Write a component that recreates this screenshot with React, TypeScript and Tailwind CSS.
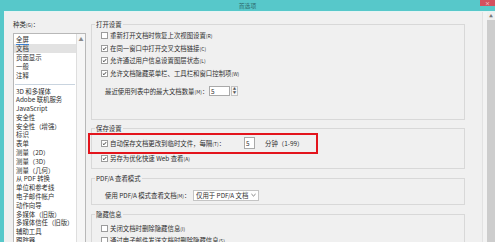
import React from 'react';

const topItems = ['全屏', '文档', '页面显示', '一般', '注释'];
const moreItems = [
  '3D 和多媒体',
  'Adobe 联机服务',
  'JavaScript',
  '安全性',
  '安全性（增强）',
  '标识',
  '表单',
  '测量（2D）',
  '测量（3D）',
  '测量（几何）',
  '从 PDF 转换',
  '单位和参考线',
  '电子邮件帐户',
  '动作向导',
  '多媒体（旧版）',
  '多媒体信任（旧版）',
  '辅助工具',
  '跟踪器',
];

function Check({ on }: { on?: boolean }) {
  return (
    <span className="w-[7px] h-[7px] border border-[#9c9c9c] bg-white flex items-center justify-center shrink-0">
      {on && (
        <svg viewBox="0 0 7 7" className="w-[7px] h-[7px]">
          <path d="M1.2 3.6 L2.8 5.2 L5.8 1.6" stroke="#1f1f1f" strokeWidth="1.2" fill="none" />
        </svg>
      )}
    </span>
  );
}

function Key({ k }: { k: string }) {
  return <span className="text-[5px]">({k})</span>;
}

function CheckRow({ on, text, k }: { on?: boolean; text: string; k: string }) {
  return (
    <div className="h-[12.5px] flex items-center gap-[2px]">
      <Check on={on} />
      <span className="whitespace-nowrap">
        {text}
        <Key k={k} />
      </span>
    </div>
  );
}

function Group({ title, className, children }: { title: string; className?: string; children: React.ReactNode }) {
  return (
    <fieldset className={`border border-[#d8d8d8] px-0 ${className ?? ''}`}>
      <legend className="ml-[3px] px-[1px] leading-[9px]">{title}</legend>
      {children}
    </fieldset>
  );
}

export default function App() {
  return (
    <div className="w-[495px] h-[242px] overflow-hidden bg-[#57c8ca] relative font-['Noto_Sans_CJK_SC','Noto_Sans',sans-serif] text-[6.4px] leading-[9px] text-[#2e2e2e]">
      {/* title bar */}
      <div className="h-[11px] flex items-center justify-center">
        <span className="text-[5.8px] text-[#2f6e70]">首选项</span>
      </div>
      <div className="absolute right-0 top-0 w-[15px] h-[6px] bg-[#d4505e] flex items-center justify-center text-white text-[5px] leading-[6px]">
        ×
      </div>

      <div className="h-[231px] ml-[4px] bg-[#f0f0f0] border-t border-[#e6f4f4] flex">
        {/* categories */}
        <div className="w-[82px] pl-[9px] pt-[7.5px] flex flex-col shrink-0">
          <div>
            种类<Key k="G" />：
          </div>
          <div className="mt-[4.5px] flex-1 bg-white border border-[#b8b8b8] flex">
            <div className="flex-1 pt-[0.5px]">
              {topItems.map((t, i) => (
                <div
                  key={t}
                  className={`h-[9px] pl-[2px] ${i === 1 ? 'bg-[#e2e2e2]' : ''}`}
                >
                  <span className={i === 0 ? 'border-b border-[#3b82d6]' : ''}>{t}</span>
                </div>
              ))}
              <div className="mt-[4px] mb-[3px] mx-[1px] h-px bg-[#c9d4df]" />
              {moreItems.map((t) => (
                <div key={t} className="h-[8.8px] leading-[8.8px] pl-[2px] whitespace-nowrap">
                  {t}
                </div>
              ))}
            </div>
            <div className="w-[9px] border-l border-[#dedede] bg-[#f6f6f6] flex justify-center">
              <span className="text-[5px] leading-[9px] text-[#8a8a8a]">▲</span>
            </div>
          </div>
        </div>

        {/* settings */}
        <div className="flex-1 pl-[5px] pr-[17px] pt-[7.5px] flex flex-col">
          <Group title="打开设置">
            <div className="pl-[9px] pt-[1px] pb-[22.5px]">
              <CheckRow text="重新打开文档时恢复上次视图设置" k="R" />
              <CheckRow on text="在同一窗口中打开交叉文档链接" k="C" />
              <CheckRow on text="允许通过用户信息设置图层状态" k="L" />
              <CheckRow on text="允许文档隐藏菜单栏、工具栏和窗口控制项" k="W" />
              <div className="mt-[6px] h-[11px] ml-[4px] flex items-center">
                <span className="w-[104px] whitespace-nowrap">
                  最近使用列表中的最大文档数量<Key k="M" />：
                </span>
                <span className="w-[21px] h-[10px] bg-white border border-[#a9a9a9] pl-[1px] flex items-center">5</span>
                <span className="w-[7px] h-[10px] ml-[1px] border border-[#c4c4c4] bg-[#f7f7f7] flex flex-col items-center justify-center text-[3.5px] leading-[4px] text-[#555]">
                  <span>▲</span>
                  <span>▼</span>
                </span>
              </div>
            </div>
          </Group>

          <Group title="保存设置" className="mt-[4px]">
            <div className="pl-[9px] pt-[3px] pb-[4px]">
              <div className="h-[14px] flex items-center gap-[2px]">
                <Check on />
                <span className="w-[132px] whitespace-nowrap">
                  自动保存文档更改到临时文件，每隔<Key k="T" />：
                </span>
                <span className="w-[11px] h-[12px] bg-white border border-[#a9a9a9] pl-[1px] flex items-center">5</span>
                <span className="ml-[8px] whitespace-nowrap">分钟（1-99）</span>
              </div>
              <div className="mt-[2px] h-[12px] flex items-center gap-[2px]">
                <Check on />
                <span className="whitespace-nowrap">
                  另存为优化快速 Web 查看<Key k="A" />
                </span>
              </div>
            </div>
          </Group>

          <Group title="PDF/A 查看模式" className="mt-[5px]">
            <div className="pl-[13px] pt-[6px] pb-[3px]">
              <div className="h-[12px] flex items-center">
                <span className="w-[88px] whitespace-nowrap">
                  使用 PDF/A 模式查看文档<Key k="M" />：
                </span>
                <span className="w-[66px] h-[11px] bg-white border border-[#c4c4c4] pl-[2px] flex items-center justify-between gap-[2px]">
                  <span className="whitespace-nowrap">仅用于 PDF/A 文档</span>
                  <svg viewBox="0 0 6 4" className="w-[5px] h-[4px] mr-[2px] shrink-0">
                    <path d="M0.5 0.8 L3 3.2 L5.5 0.8" stroke="#555" strokeWidth="0.9" fill="none" />
                  </svg>
                </span>
              </div>
            </div>
          </Group>

          <Group title="隐藏信息" className="mt-[5px]">
            <div className="pl-[9px] pt-[3px]">
              <div className="h-[12px] flex items-center gap-[2px]">
                <Check />
                <span className="whitespace-nowrap">
                  关闭文档时删除隐藏信息<Key k="I" />
                </span>
              </div>
              <div className="h-[12px] flex items-center gap-[2px]">
                <Check />
                <span className="whitespace-nowrap">
                  通过电子邮件发送文档时删除隐藏信息<Key k="S" />
                </span>
              </div>
            </div>
          </Group>
        </div>

        {/* window scrollbar */}
        <div className="w-[13px] flex shrink-0">
          <div className="w-[5px] border-l border-[#e2e2e2] bg-[#f3f3f3]" />
          <div className="w-[8px] flex flex-col">
            <div className="h-[8px] bg-[#efefef] flex items-center justify-center text-[4px] leading-[8px] text-[#777]">▲</div>
            <div className="flex-1 bg-[#cdcdcd]" />
          </div>
        </div>
      </div>

      {/* red highlight annotation */}
      <div className="absolute left-[88px] top-[133px] w-[230px] h-[21px] border-2 border-[#e3141c]" />
    </div>
  );
}
